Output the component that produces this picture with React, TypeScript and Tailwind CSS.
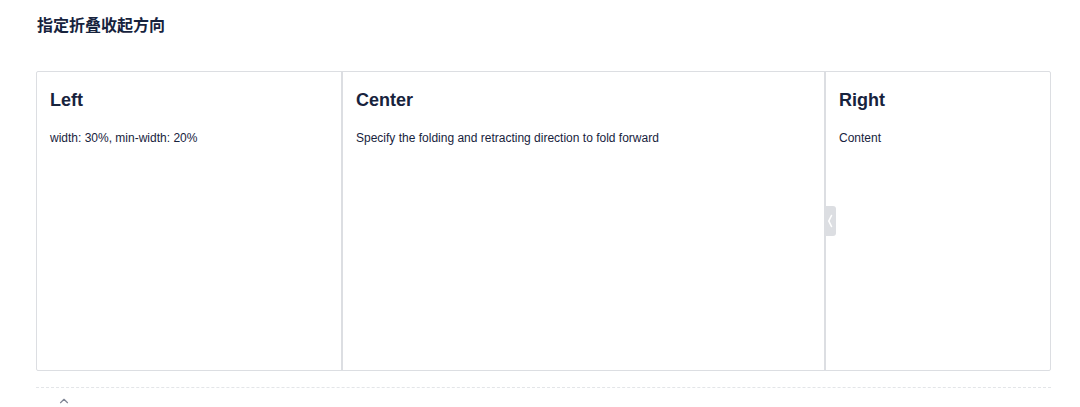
import { ChevronUp } from "lucide-react";

const font = { fontFamily: '"Liberation Sans", Arial, "Noto Sans CJK SC", sans-serif' };

function Pane({ title, text }: { title: string; text: string }) {
    return (
        <div className="px-[13px] pt-[15px]">
            <h3 className="text-[18px] leading-[27px] font-bold text-[#17233d]">{title}</h3>
            <p className="mt-[15px] text-[12px] leading-[18px] text-[#17233d]">{text}</p>
        </div>
    );
}

export default function App() {
    return (
        <div className="bg-white w-[1080px] h-[407px] overflow-hidden" style={font}>
            <div className="pl-[37px] pt-[15px] pr-[29px]">
                <h2 className="text-[16px] leading-[22px] font-bold text-[#17233d]">指定折叠收起方向</h2>
            </div>
            <div className="ml-[36px] mr-[29px] mt-[34px]">
                <div className="flex h-[300px] border border-[#dcdee2] rounded-[2px]">
                    <div className="w-[304px] shrink-0">
                        <Pane title="Left" text="width: 30%, min-width: 20%" />
                    </div>
                    <div className="w-[2px] bg-[#dcdee2] shrink-0" />
                    <div className="flex-1">
                        <Pane title="Center" text="Specify the folding and retracting direction to fold forward" />
                    </div>
                    <div className="relative w-[2px] bg-[#dcdee2] shrink-0">
                        <div className="absolute left-0 top-[134px] w-[12px] h-[30px] bg-[#dcdee2] rounded-r-[3px] flex items-center justify-center">
                            <svg width="6" height="14" viewBox="0 0 6 14" fill="none">
                                <path d="M4.5 1.5 L1.8 7 L4.5 12.5" stroke="white" strokeWidth="1.6" strokeLinecap="round" />
                            </svg>
                        </div>
                    </div>
                    <div className="w-[224px] shrink-0">
                        <Pane title="Right" text="Content" />
                    </div>
                </div>
                <div className="mt-[16px] border-t border-dashed border-[#e3e5e8]" />
                <div className="pl-[21px] pt-[6px]">
                    <ChevronUp className="w-[14px] h-[14px] text-[#808695]" strokeWidth={2} />
                </div>
            </div>
        </div>
    );
}
